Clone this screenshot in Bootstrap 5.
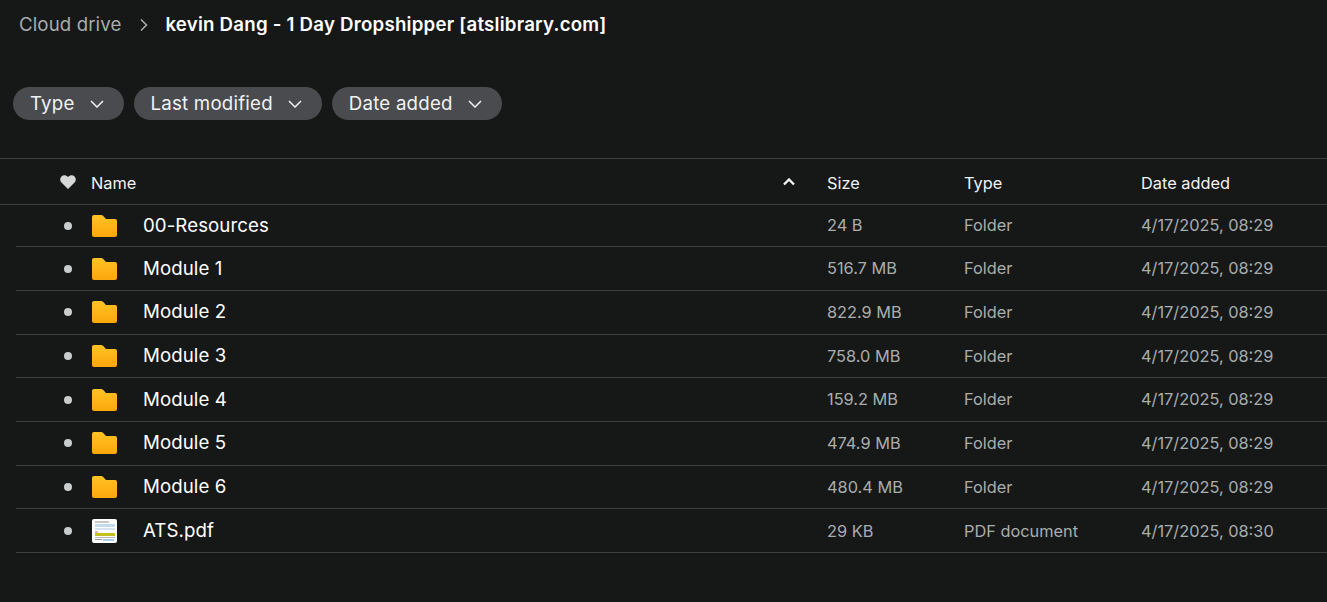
<!DOCTYPE html>
<html lang="en"><head><meta charset="utf-8"><title>Cloud drive</title>
<link href="https://cdn.jsdelivr.net/npm/bootstrap@5.3.0/dist/css/bootstrap.min.css" rel="stylesheet">
<style>
html,body{height:100%}
body{background:#161818;color:#fff;font-family:Inter,"Liberation Sans",sans-serif;overflow:hidden}
.crumbs{height:49px;padding-left:19px;font-size:18.67px}
.crumb-root{color:#a9adad;letter-spacing:.1px}
.crumb-sep{width:44px;padding-left:18px}
.crumb-now{font-weight:600;letter-spacing:.23px}
.filters{padding:38px 0 0 13px;height:109px;gap:10px}
.chip{height:33px;background:#494b4f;color:#f1f2f2;border:0;border-radius:17px;padding:0 20px 0 17px;font-size:18.67px;letter-spacing:.22px;gap:15px}
.chip:hover,.chip:focus{background:#494b4f;color:#f1f2f2}
.file-table{border-top:1px solid #3f4141}
.file-row{display:grid;grid-template-columns:76px 51px 684px 137px 177px 1fr;align-items:center;height:43.71px;margin-left:16px;border-bottom:1px solid #3f4141}
.first-row{height:42.2px}
.head-row{grid-template-columns:91px 736px 137px 177px 1fr;height:46px;margin-left:0;padding-top:4px;font-size:16.33px;color:#f1f2f2}
.heart-cell{padding-left:60px}
.heart-icon{display:block;margin-top:-4px}
.dot-mark{display:block;width:8px;height:8px;border-radius:50%;background:#c9cdcd;margin-left:48px}
.head-name{padding-right:32px}
.sort-icon{margin-top:-2px}
.name-cell{font-size:18.67px;letter-spacing:.08px;color:#fff}
.meta-cell{font-size:16.33px;color:#a9adad}
.thumb-icon,.folder-icon{display:block}
</style></head><body>
<nav class="crumbs d-flex align-items-center">
<span class="crumb-root">Cloud drive</span>
<span class="crumb-sep d-flex align-items-center"><svg width="10" height="14" viewBox="0 0 10 14" fill="none" stroke="#a9adad" stroke-width="1.5"><path d="M2 1.5 7.5 7 2 12.5"/></svg></span>
<span class="crumb-now">kevin Dang - 1 Day Dropshipper [atslibrary.com]</span>
</nav>
<div class="filters d-flex align-items-start">
<button class="chip btn d-flex align-items-center">Type <svg width="14" height="8" viewBox="0 0 14 8" fill="none" stroke="#f1f2f2" stroke-width="1.5"><path d="M1 1l6 6 6-6"/></svg></button>
<button class="chip btn d-flex align-items-center">Last modified <svg width="14" height="8" viewBox="0 0 14 8" fill="none" stroke="#f1f2f2" stroke-width="1.5"><path d="M1 1l6 6 6-6"/></svg></button>
<button class="chip btn d-flex align-items-center">Date added <svg width="14" height="8" viewBox="0 0 14 8" fill="none" stroke="#f1f2f2" stroke-width="1.5"><path d="M1 1l6 6 6-6"/></svg></button>
</div>
<svg width="0" height="0" class="position-absolute"><defs>
<linearGradient id="fold" x1="0" y1="0" x2="0" y2="1"><stop offset="0" stop-color="#ffc224"/><stop offset="1" stop-color="#fca70c"/></linearGradient>
<symbol id="folder" viewBox="0 0 25 22"><path d="M0 2A2 2 0 0 1 2 0H9c1 0 1.600.4 2.200 1L14 4h9a2 2 0 0 1 2 2v14a2 2 0 0 1-2 2H2a2 2 0 0 1-2-2z" fill="url(#fold)"/></symbol>
</defs></svg>
<div class="file-table">
<div class="file-row head-row">
<div class="heart-cell"><svg class="heart-icon" width="16" height="14" viewBox="0 0 16 14"><path d="M8 14 1.500 7.600C-.2 5.900-.2 3 1.500 1.400 3.200-.3 6-.2 8 2c2-2.200 4.800-2.300 6.500-.6 1.700 1.600 1.700 4.500 0 6.200z" fill="#d6d8d8"/></svg></div>
<div class="head-name d-flex justify-content-between align-items-center"><span>Name</span><svg class="sort-icon" width="12" height="8" viewBox="0 0 12 8" fill="none" stroke="#f1f2f2" stroke-width="2.400"><path d="M1 6.500 6 1.500l5 5"/></svg></div>
<div>Size</div><div>Type</div><div>Date added</div>
</div>
<div class="file-row first-row"><div><span class="dot-mark"></span></div><div><svg class="folder-icon" width="25" height="22"><use href="#folder"/></svg></div><div class="name-cell">00-Resources</div><div class="meta-cell">24 B</div><div class="meta-cell">Folder</div><div class="meta-cell">4/17/2025, 08:29</div></div>
<div class="file-row"><div><span class="dot-mark"></span></div><div><svg class="folder-icon" width="25" height="22"><use href="#folder"/></svg></div><div class="name-cell">Module 1</div><div class="meta-cell">516.7 MB</div><div class="meta-cell">Folder</div><div class="meta-cell">4/17/2025, 08:29</div></div>
<div class="file-row"><div><span class="dot-mark"></span></div><div><svg class="folder-icon" width="25" height="22"><use href="#folder"/></svg></div><div class="name-cell">Module 2</div><div class="meta-cell">822.9 MB</div><div class="meta-cell">Folder</div><div class="meta-cell">4/17/2025, 08:29</div></div>
<div class="file-row"><div><span class="dot-mark"></span></div><div><svg class="folder-icon" width="25" height="22"><use href="#folder"/></svg></div><div class="name-cell">Module 3</div><div class="meta-cell">758.0 MB</div><div class="meta-cell">Folder</div><div class="meta-cell">4/17/2025, 08:29</div></div>
<div class="file-row"><div><span class="dot-mark"></span></div><div><svg class="folder-icon" width="25" height="22"><use href="#folder"/></svg></div><div class="name-cell">Module 4</div><div class="meta-cell">159.2 MB</div><div class="meta-cell">Folder</div><div class="meta-cell">4/17/2025, 08:29</div></div>
<div class="file-row"><div><span class="dot-mark"></span></div><div><svg class="folder-icon" width="25" height="22"><use href="#folder"/></svg></div><div class="name-cell">Module 5</div><div class="meta-cell">474.9 MB</div><div class="meta-cell">Folder</div><div class="meta-cell">4/17/2025, 08:29</div></div>
<div class="file-row"><div><span class="dot-mark"></span></div><div><svg class="folder-icon" width="25" height="22"><use href="#folder"/></svg></div><div class="name-cell">Module 6</div><div class="meta-cell">480.4 MB</div><div class="meta-cell">Folder</div><div class="meta-cell">4/17/2025, 08:29</div></div>
<div class="file-row"><div><span class="dot-mark"></span></div><div><svg class="thumb-icon" width="25" height="24" viewBox="0 0 25 24"><rect width="25" height="24" rx="2" fill="#fff"/><rect x="3" y="2" width="14" height="2" fill="#c9c9c9"/><rect x="3" y="5" width="20" height="3" fill="#c5dcef"/><rect x="3" y="9" width="20" height="2" fill="#d8e4ee"/><rect x="3" y="12" width="3" height="2" fill="#efb4a8"/><rect x="3" y="14" width="20" height="3" fill="#c3c21c"/><rect x="3" y="18" width="20" height="1" fill="#bbb"/><rect x="3" y="20" width="7" height="1" fill="#999"/><rect x="11" y="20" width="11" height="2" fill="#a9cfe9"/></svg></div><div class="name-cell">ATS.pdf</div><div class="meta-cell">29 KB</div><div class="meta-cell">PDF document</div><div class="meta-cell">4/17/2025, 08:30</div></div>
</div>
</body></html>
